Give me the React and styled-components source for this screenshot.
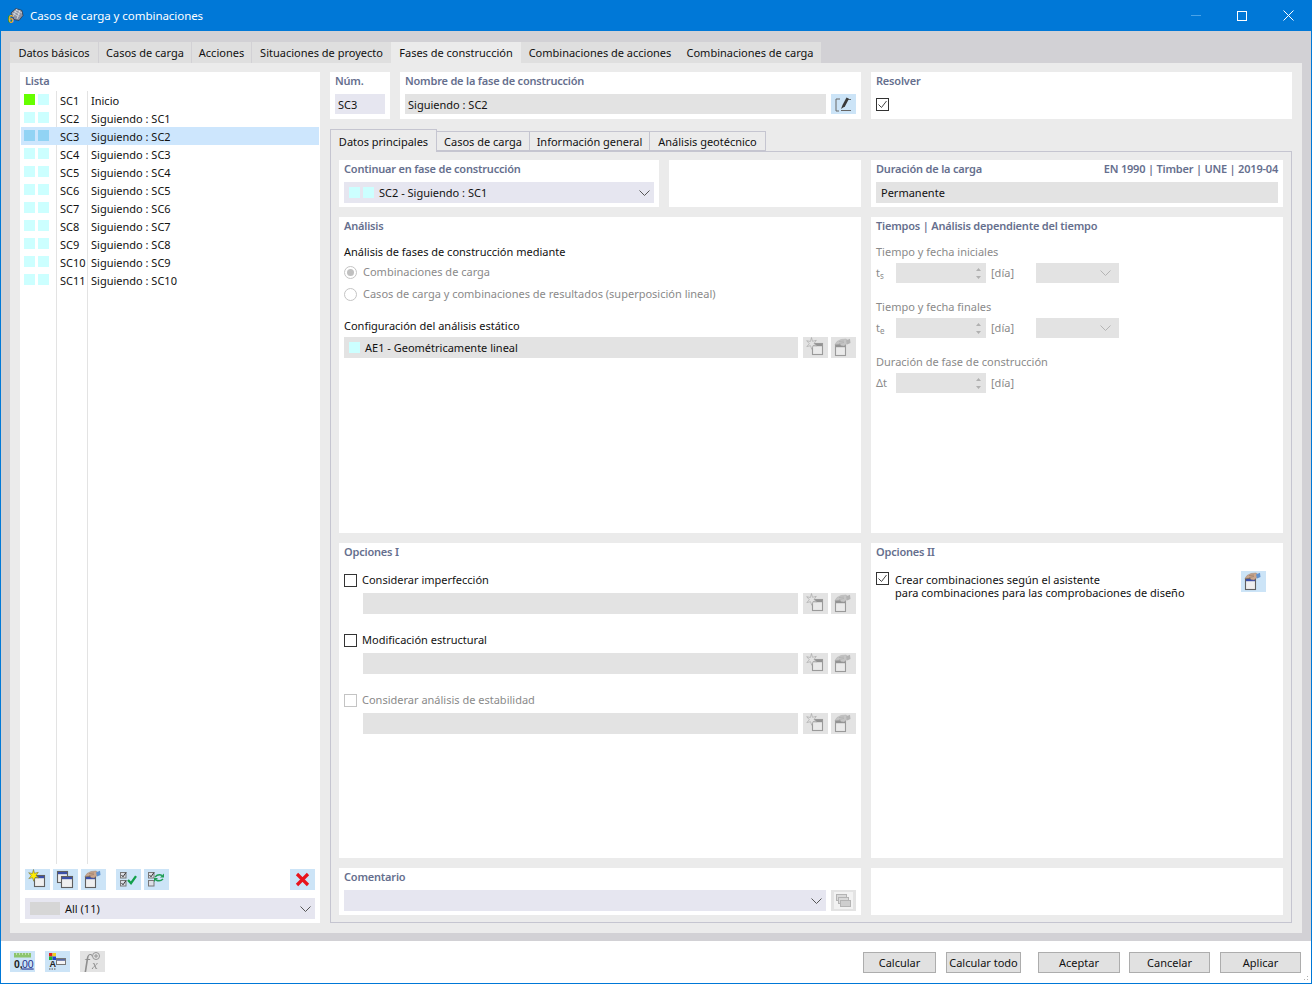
import React from 'react';
import styled, { createGlobalStyle } from 'styled-components';

const Global = createGlobalStyle`
  html, body { margin: 0; padding: 0; background: #fff; }
  body { font-family: 'Noto Sans', 'Open Sans', sans-serif; font-size: 11px; color: #111; }
  * { box-sizing: border-box; }
`;

const STAGES = [
  ['SC1', 'Inicio'], ['SC2', 'Siguiendo : SC1'], ['SC3', 'Siguiendo : SC2'], ['SC4', 'Siguiendo : SC3'],
  ['SC5', 'Siguiendo : SC4'], ['SC6', 'Siguiendo : SC5'], ['SC7', 'Siguiendo : SC6'], ['SC8', 'Siguiendo : SC7'],
  ['SC9', 'Siguiendo : SC8'], ['SC10', 'Siguiendo : SC9'], ['SC11', 'Siguiendo : SC10'],
];

// all toolbar icons share the 25x21 box of the button
const Ico = ({ children }) => <svg width="25" height="21" viewBox="0 0 25 21">{children}</svg>;

const Frame = ({ x, y, w = 10, h = 11 }) => (
  <>
    <rect x={x + 0.5} y={y + 0.5} width={w} height={h} fill="#efefef" stroke="#5f5f5f" strokeWidth="1.100" />
    <rect x={x + 1} y={y + 1} width={w - 1} height={2.200} fill="#3b4fa8" />
  </>
);

const NewIcon = () => (
  <Ico>
    <Frame x={9} y={6} />
    <path d="M8.500 0.500l1 3.800 3.800-1-2.300 3.200 2.800 2.300-3.700-.3-1.300 3.800-1.300-3.600-3.700.9 2.500-2.900-2.600-3 3.700.8z" fill="#ffee00" stroke="#77703a" strokeWidth=".6" />
  </Ico>
);
const CopyIcon = () => <Ico><Frame x={4} y={2} /><Frame x={8} y={7} w={11} /></Ico>;
const HandIcon = () => (
  <Ico>
    <Frame x={4} y={7} />
    <path d="M4 7.500l2-3 4-2 5-.5 2 1.500-1 3-3 2.500-3-.5-1-1.500z" fill="#c9a68e" stroke="#9a806e" strokeWidth=".5" />
    <path d="M8 4.500l5-.5M8 6.500l5-1" stroke="#8f7361" strokeWidth=".6" />
    <path d="M15 3.500l4-1.800.5 4.300-3.500 1.500z" fill="#5f92d0" />
  </Ico>
);
const Box = ({ y, on }) => (
  <>
    <rect x="4.500" y={y + 0.5} width="5.500" height="5.500" fill="#dcdfe6" stroke="#777" />
    {on && <path d={`M5.500 ${y + 3}l1.500 1.800 3-4.300`} fill="none" stroke="#333" />}
  </>
);
const ChecksIcon = () => (
  <Ico>
    <Box y={3} on /><Box y={11} on />
    <path d="M12 11l3 3.200 5-7" fill="none" stroke="#12a04a" strokeWidth="2.300" />
  </Ico>
);
const SwapIcon = () => (
  <Ico>
    <Box y={3} on /><Box y={11} />
    <path d="M11 8c2-2 5-2.500 7-1.500M19 10c-2 2-5 2-7 1" fill="none" stroke="#1f9e55" strokeWidth="1.500" />
    <path d="M20 4.500v4h-4zM10 13v-4h4z" fill="#1f9e55" />
  </Ico>
);
const RedX = () => (
  <Ico><path d="M7 5l11 11M18 5L7 16" stroke="#e8141c" strokeWidth="3.200" /></Ico>
);
const EditIcon = () => (
  <Ico>
    <path d="M9 5H5v12h3M10 16.500h10M17 5.500h3" fill="none" stroke="#666" />
    <path d="M10 15l1.500-4 4-7.500 2.500 1.200-4 7.500z" fill="#3a3a3a" />
  </Ico>
);
const StackIcon = () => (
  <Ico>
    <rect x="3" y="2" width="19" height="17" fill="#fff" />
    <rect x="5.500" y="4.500" width="10" height="6" fill="#d0d0d0" stroke="#8e8e8e" />
    <rect x="7.500" y="7.500" width="10" height="6" fill="#d0d0d0" stroke="#8e8e8e" />
    <rect x="9.500" y="10.500" width="10" height="6" fill="#bcbcbc" stroke="#8e8e8e" />
  </Ico>
);
const UnitsIcon = () => (
  <Ico>
    <rect x="4" y="2" width="17" height="4.500" fill="#8cc56e" />
    <path d="M6.500 2v2M9.500 2v2M12.500 2v2M15.500 2v2M18.500 2v2" stroke="#bfe0ac" />
    <text x="4" y="16.500" fontFamily="Liberation Sans" fontSize="10.500" fontWeight="700" fill="#222">0,</text>
    <text x="12" y="16.500" fontFamily="Liberation Sans" fontSize="10.500" fill="#1c2c8c" textDecoration="underline">00</text>
  </Ico>
);
const ColorIcon = () => (
  <Ico>
    <rect x="4" y="2" width="3.500" height="3.500" fill="#e02020" />
    <rect x="7.500" y="2" width="3.500" height="3.500" fill="#f0d020" />
    <rect x="4" y="5.500" width="3.500" height="3.500" fill="#20b030" />
    <rect x="7.500" y="5.500" width="3.500" height="3.500" fill="#2040d0" />
    <text x="4.500" y="16" fontFamily="Liberation Sans" fontSize="9" fontWeight="700" fill="#222">A</text>
    <path d="M4 18h1.500M6.500 18H8M9 18h1.500" stroke="#555" />
    <rect x="11.500" y="7.500" width="9" height="6" fill="#f4f4f4" stroke="#777" />
    <rect x="12" y="8" width="8" height="1.800" fill="#5a6aa0" />
  </Ico>
);
const FxIcon = () => (
  <Ico>
    <text x="4" y="18" fontFamily="Liberation Serif" fontStyle="italic" fontSize="20" fill="#4a4a4a">f</text>
    <text x="12" y="18" fontFamily="Liberation Serif" fontStyle="italic" fontSize="13" fill="#4a4a4a">x</text>
    <circle cx="16" cy="5" r="3.500" fill="none" stroke="#555" />
    <path d="M14 5h4M16 3v4" stroke="#555" />
  </Ico>
);
const AppIcon = () => (
  <svg width="16" height="16" viewBox="0 0 16 16" style={{ flexShrink: 0 }}>
    <path d="M3 5l5-4.500 6 2 1 5-4 5-5-1z" fill="#8d93a3" stroke="#2c3140" strokeWidth=".7" />
    <path d="M6 3l6 3.500M4.500 5l6 3.500M8 1.500l6 3.500M9 .8l-4 8M12 2l-3 9" stroke="#e4e6ea" strokeWidth=".7" />
    <text x="0" y="15" fontFamily="Liberation Sans" fontSize="10" fontWeight="700" fill="#f2bd1c" stroke="#6b5200" strokeWidth=".2">6</text>
  </svg>
);
const Chevron = ({ $muted }) => (
  <svg width="11" height="6" viewBox="0 0 11 6" style={{ flexShrink: 0 }}>
    <path d="M.5.5l5 5 5-5" fill="none" stroke={$muted ? '#b4b4b4' : '#555'} />
  </svg>
);

const Window = styled.div`
  width: 1312px;
  height: 984px;
  display: flex;
  flex-direction: column;
  border: 1px solid #0078d7;
  border-top: 0;
  overflow: hidden;
`;

const TitleBar = styled.header`
  height: 31px;
  flex-shrink: 0;
  background: #0078d7;
  color: #fff;
  display: flex;
  align-items: center;
  padding-left: 7px;
  font-size: 11.500px;
  letter-spacing: -0.05px;
`;

const TitleText = styled.span`
  flex: 1;
  margin-left: 6px;
`;

const WinButton = styled.div`
  width: 46px;
  height: 31px;
  display: flex;
  align-items: center;
  justify-content: center;
`;

const Body = styled.div`
  flex: 1;
  min-height: 0;
  background: #d2d1d5;
  padding: 11px 9px 8px;
  display: flex;
  flex-direction: column;
`;

const TabStrip = styled.nav`
  display: flex;
  height: 21px;
  flex-shrink: 0;
`;

const Tab = styled.div`
  width: ${({ $w }) => $w}px;
  background: ${({ $active }) => ($active ? '#ebebeb' : '#dfdfdf')};
  margin-right: ${({ $gap }) => ($gap ? 1 : 0)}px;
  display: flex;
  align-items: center;
  justify-content: center;
  white-space: nowrap;
`;

const Sheet = styled.main`
  flex: 1;
  min-height: 0;
  background: #ebebeb;
  padding: 9px 10px 10px;
  display: flex;
  gap: 10px;
`;

const ListPanel = styled.aside`
  width: 300px;
  background: #fff;
  display: flex;
  flex-direction: column;
  padding: 1px 1px 4px;
`;

const Heading = styled.div`
  height: 16px;
  line-height: 16px;
  font-weight: 600;
  letter-spacing: -0.2px;
  color: #666f8e;
  white-space: nowrap;
  display: flex;
  justify-content: space-between;
  flex-shrink: 0;
`;

const ListHeading = styled(Heading)`
  padding-left: 4px;
  margin-bottom: 2px;
`;

const List = styled.div`
  flex: 1;
  background:
    linear-gradient(#e3e3e3, #e3e3e3) 35px 0 / 1px 773px no-repeat,
    linear-gradient(#e3e3e3, #e3e3e3) 66px 0 / 1px 773px no-repeat;
`;

const Row = styled.div`
  height: 18px;
  display: flex;
  align-items: center;
  background: ${({ $selected }) => ($selected ? '#cde6fd' : 'transparent')};
`;

const Swatches = styled.div`
  width: 36px;
  display: flex;
  gap: 3px;
  padding-left: 3px;
  margin-top: -1px;
`;

const SwatchPair = styled.div`
  display: flex;
  gap: 3px;
`;

const Swatch = styled.i`
  display: block;
  width: 11px;
  height: 11px;
  flex-shrink: 0;
  background: ${({ $color }) => $color || '#ccffff'};
`;

const RowCode = styled.span`
  width: 31px;
  padding-left: 3px;
`;

const RowName = styled.span`
  padding-left: 3px;
`;

const ListTools = styled.div`
  display: flex;
  gap: 3px;
  padding: 0 4px;
  margin-bottom: 8px;
`;

const ToolGap = styled.div`
  width: ${({ $w }) => ($w ? `${$w}px` : 'auto')};
  flex: ${({ $w }) => ($w ? 'none' : 1)};
`;

const IconBtn = styled.div`
  width: 25px;
  height: ${({ $h }) => $h || 21}px;
  flex-shrink: 0;
  display: flex;
  align-items: center;
  justify-content: center;
  background: ${({ $off }) => ($off ? '#e3e3e3' : '#cce4f7')};
  svg { ${({ $off }) => ($off ? 'filter: grayscale(1) opacity(.55);' : '')} }
`;

const Select = styled.div`
  height: 21px;
  flex: 1;
  min-width: 0;
  background: #e6e6f0;
  display: flex;
  align-items: center;
  gap: 5px;
  padding: 0 4px 0 5px;
`;

const ListSelect = styled(Select)`
  flex: none;
  margin: 0 4px;
`;

const AllSwatch = styled.i`
  width: 30px;
  height: 13px;
  background: #d6d6d6;
`;

const Grow = styled.span`
  flex: 1;
`;

const Right = styled.section`
  flex: 1;
  min-width: 0;
  display: flex;
  flex-direction: column;
`;

const TopRow = styled.div`
  display: grid;
  grid-template-columns: 60px 461px 421px;
  gap: 10px;
  height: 47px;
  flex-shrink: 0;
  margin-bottom: 10px;
`;

const Card = styled.div`
  background: #fff;
  padding: 1px 5px;
  min-width: 0;
`;

const FieldRow = styled.div`
  display: flex;
  gap: 5px;
  margin-top: ${({ $top }) => $top ?? 5}px;
  padding-left: ${({ $indent }) => $indent || 0}px;
  ${IconBtn} + ${IconBtn} { margin-left: -2px; }
`;

const Field = styled.div`
  height: ${({ $h }) => $h || 21}px;
  flex: 1;
  min-width: 0;
  background: ${({ $tone }) => ($tone === 'blue' ? '#e6e6f0' : '#e3e3e3')};
  display: flex;
  align-items: center;
  gap: 5px;
  padding: 0 ${({ $pad }) => $pad ?? 5}px;
`;

const Check = styled.span`
  width: 13px;
  height: 13px;
  flex-shrink: 0;
  border: 1px solid ${({ $off }) => ($off ? '#c4c4c4' : '#333')};
  background: #fff;
  display: flex;
  align-items: center;
  justify-content: center;
`;

const Tick = () => (
  <svg width="11" height="11" viewBox="0 0 11 11"><path d="M1.500 5.500l3 3 5-6.500" fill="none" stroke="#444" /></svg>
);

const SubTabs = styled.nav`
  display: flex;
  align-items: flex-end;
  height: 22px;
  flex-shrink: 0;
  position: relative;
  z-index: 1;
`;

const SubTab = styled.div`
  width: ${({ $w }) => $w}px;
  height: ${({ $active }) => ($active ? 23 : 20)}px;
  margin-bottom: ${({ $active }) => ($active ? -1 : 0)}px;
  background: #ebebeb;
  border: 1px solid #c5c5d0;
  border-bottom: ${({ $active }) => ($active ? 0 : '1px solid #c5c5d0')};
  margin-right: -1px;
  display: flex;
  align-items: center;
  justify-content: center;
  white-space: nowrap;
`;

const TabBody = styled.div`
  flex: 1;
  min-height: 0;
  border: 1px solid #c5c5d0;
  padding: 8px 8px 7px;
  display: grid;
  grid-template-columns: 522px 412px;
  grid-template-rows: 47px 316px 315px 47px;
  gap: 10px;
`;

const Split = styled.div`
  display: grid;
  grid-template-columns: 320px 192px;
  gap: 10px;
`;

const Line = styled.div`
  height: 16px;
  line-height: 16px;
  white-space: nowrap;
  color: ${({ $off }) => ($off ? '#8a8a8a' : 'inherit')};
  margin-top: ${({ $top }) => $top || 0}px;
`;

const OptionLine = styled(Line)`
  display: flex;
  align-items: center;
  gap: ${({ $gap }) => $gap || 5}px;
`;

const Radio = styled.span`
  width: 13px;
  height: 13px;
  border-radius: 50%;
  border: 1px solid #c4c4c4;
  background: #fff;
  display: flex;
  align-items: center;
  justify-content: center;
  flex-shrink: 0;
  &::after {
    content: '';
    width: 7px;
    height: 7px;
    border-radius: 50%;
    background: ${({ $on }) => ($on ? '#c0c0c0' : 'transparent')};
  }
`;

const TimeRow = styled.div`
  display: flex;
  align-items: center;
  height: 20px;
  color: #8a8a8a;
  margin-top: 3px;
`;

const TimeSymbol = styled.span`
  width: 20px;
  margin-top: -2px;
  sub { font-size: 8px; vertical-align: -2px; line-height: 0; }
`;

const Spin = styled.div`
  width: 90px;
  height: 20px;
  background: #e3e3e3;
  display: flex;
  align-items: center;
  justify-content: flex-end;
  padding-right: 4px;
`;

const TimeUnit = styled.span`
  width: 50px;
  padding-left: 5px;
  margin-top: -2px;
`;

const TimeSelect = styled.div`
  width: 83px;
  height: 20px;
  background: #e3e3e3;
  display: flex;
  align-items: center;
  justify-content: flex-end;
  padding-right: 8px;
`;

const OptBlock = styled.div`
  margin-top: ${({ $top }) => $top}px;
`;

const WizardRow = styled.div`
  display: flex;
  align-items: flex-start;
  gap: 6px;
  margin-top: 12px;
`;

const WizardText = styled.div`
  flex: 1;
  line-height: 13px;
  padding-top: 1px;
`;

const WizardBtn = styled(IconBtn)`
  margin: -1px 12px 0 0;
`;

const Footer = styled.footer`
  height: 42px;
  flex-shrink: 0;
  background: #fff;
  display: flex;
  align-items: flex-start;
  padding: 10px 0 0 9px;
  position: relative;
`;

const FootIcons = styled.div`
  display: flex;
  gap: 10px;
  flex: 1;
`;

const FootButtons = styled.div`
  display: flex;
  gap: 10px;
  margin: 1px 10px 0 0;
`;

const Button = styled.div`
  width: ${({ $w }) => $w}px;
  margin-left: ${({ $ml }) => $ml || 0}px;
  height: 21px;
  background: #e1e1e1;
  border: 1px solid #adadad;
  display: flex;
  align-items: center;
  justify-content: center;
  white-space: nowrap;
`;

const Grip = styled.i`
  position: absolute;
  right: 1px;
  bottom: 1px;
  width: 10px;
  height: 10px;
  background:
    radial-gradient(circle, #b0b0b0 1px, transparent 1px) 0 0 / 3px 3px;
  clip-path: polygon(100% 0, 100% 100%, 0 100%);
`;

const SpinArrows = () => (
  <svg width="7" height="13" viewBox="0 0 7 13"><path d="M3.500 1L6 4H1zM3.500 12L1 9h5z" fill="#b0b0b0" /></svg>
);

const TOP_TABS = [
  ['Datos básicos', 88, 1], ['Casos de carga', 92, 1], ['Acciones', 59, 1], ['Situaciones de proyecto', 139, 0],
  ['Fases de construcción', 130, 0], ['Combinaciones de acciones', 158, 0], ['Combinaciones de carga', 142, 0],
];

const OptionBlock = ({ top, label, off }) => (
  <OptBlock $top={top}>
    <OptionLine $off={off}><Check $off={off} />{label}</OptionLine>
    <FieldRow $indent={19}>
      <Field />
      <IconBtn $off><NewIcon /></IconBtn>
      <IconBtn $off><HandIcon /></IconBtn>
    </FieldRow>
  </OptBlock>
);

export default function App() {
  return (
    <Window>
      <Global />
      <TitleBar>
        <AppIcon />
        <TitleText>Casos de carga y combinaciones</TitleText>
        <WinButton><svg width="10" height="1"><rect width="10" height="1" fill="#4aa3e8" /></svg></WinButton>
        <WinButton><svg width="10" height="10"><rect x=".5" y=".5" width="9" height="9" fill="none" stroke="#fff" /></svg></WinButton>
        <WinButton><svg width="11" height="11"><path d="M.5.5l10 10M10.500.5l-10 10" stroke="#fff" /></svg></WinButton>
      </TitleBar>
      <Body>
        <TabStrip>
          {TOP_TABS.map(([label, w, gap]) => (
            <Tab key={label} $w={w} $gap={gap} $active={label === 'Fases de construcción'}>{label}</Tab>
          ))}
        </TabStrip>
        <Sheet>
          <ListPanel>
            <ListHeading>Lista</ListHeading>
            <List>
              {STAGES.map(([code, name], i) => (
                <Row key={code} $selected={i === 2}>
                  <Swatches>
                    <Swatch $color={i === 0 ? '#66ff00' : i === 2 ? '#91d3f4' : undefined} />
                    <Swatch $color={i === 2 ? '#91d3f4' : undefined} />
                  </Swatches>
                  <RowCode>{code}</RowCode>
                  <RowName>{name}</RowName>
                </Row>
              ))}
            </List>
            <ListTools>
              <IconBtn><NewIcon /></IconBtn>
              <IconBtn><CopyIcon /></IconBtn>
              <IconBtn><HandIcon /></IconBtn>
              <ToolGap $w={4} />
              <IconBtn><ChecksIcon /></IconBtn>
              <IconBtn><SwapIcon /></IconBtn>
              <ToolGap />
              <IconBtn><RedX /></IconBtn>
            </ListTools>
            <ListSelect>
              <AllSwatch />
              All (11)
              <Grow />
              <Chevron />
            </ListSelect>
          </ListPanel>

          <Right>
            <TopRow>
              <Card>
                <Heading>Núm.</Heading>
                <FieldRow><Field $h={20} $tone="blue" $pad={3}>SC3</Field></FieldRow>
              </Card>
              <Card>
                <Heading>Nombre de la fase de construcción</Heading>
                <FieldRow>
                  <Field $h={20} $pad={3}>Siguiendo : SC2</Field>
                  <IconBtn $h={20}><EditIcon /></IconBtn>
                </FieldRow>
              </Card>
              <Card>
                <Heading>Resolver</Heading>
                <FieldRow $top={9}><Check><Tick /></Check></FieldRow>
              </Card>
            </TopRow>

            <SubTabs>
              <SubTab $w={107} $active>Datos principales</SubTab>
              <SubTab $w={94}>Casos de carga</SubTab>
              <SubTab $w={121}>Información general</SubTab>
              <SubTab $w={117}>Análisis geotécnico</SubTab>
            </SubTabs>

            <TabBody>
              <Split>
                <Card>
                  <Heading>Continuar en fase de construcción</Heading>
                  <FieldRow>
                    <Select>
                      <SwatchPair><Swatch /><Swatch /></SwatchPair>
                      SC2 - Siguiendo : SC1
                      <Grow />
                      <Chevron />
                    </Select>
                  </FieldRow>
                </Card>
                <Card />
              </Split>
              <Card>
                <Heading><span>Duración de la carga</span><span>EN 1990 | Timber | UNE | 2019-04</span></Heading>
                <FieldRow><Field>Permanente</Field></FieldRow>
              </Card>

              <Card>
                <Heading>Análisis</Heading>
                <Line $top={10}>Análisis de fases de construcción mediante</Line>
                <OptionLine $off $top={4} $gap={6}><Radio $on />Combinaciones de carga</OptionLine>
                <OptionLine $off $top={6} $gap={6}><Radio />Casos de carga y combinaciones de resultados (superposición lineal)</OptionLine>
                <Line $top={16}>Configuración del análisis estático</Line>
                <FieldRow $top={3}>
                  <Field><Swatch />AE1 - Geométricamente lineal</Field>
                  <IconBtn $off><NewIcon /></IconBtn>
                  <IconBtn $off><HandIcon /></IconBtn>
                </FieldRow>
              </Card>
              <Card>
                <Heading>Tiempos | Análisis dependiente del tiempo</Heading>
                <Line $off $top={10}>Tiempo y fecha iniciales</Line>
                <TimeRow>
                  <TimeSymbol>t<sub>s</sub></TimeSymbol>
                  <Spin><SpinArrows /></Spin>
                  <TimeUnit>[día]</TimeUnit>
                  <TimeSelect><Chevron $muted /></TimeSelect>
                </TimeRow>
                <Line $off $top={16}>Tiempo y fecha finales</Line>
                <TimeRow>
                  <TimeSymbol>t<sub>e</sub></TimeSymbol>
                  <Spin><SpinArrows /></Spin>
                  <TimeUnit>[día]</TimeUnit>
                  <TimeSelect><Chevron $muted /></TimeSelect>
                </TimeRow>
                <Line $off $top={16}>Duración de fase de construcción</Line>
                <TimeRow>
                  <TimeSymbol>Δt</TimeSymbol>
                  <Spin><SpinArrows /></Spin>
                  <TimeUnit>[día]</TimeUnit>
                </TimeRow>
              </Card>

              <Card>
                <Heading>Opciones I</Heading>
                <OptionBlock top={12} label="Considerar imperfección" />
                <OptionBlock top={18} label="Modificación estructural" />
                <OptionBlock top={18} label="Considerar análisis de estabilidad" off />
              </Card>
              <Card>
                <Heading>Opciones II</Heading>
                <WizardRow>
                  <Check><Tick /></Check>
                  <WizardText>Crear combinaciones según el asistente<br />para combinaciones para las comprobaciones de diseño</WizardText>
                  <WizardBtn><HandIcon /></WizardBtn>
                </WizardRow>
              </Card>

              <Card>
                <Heading>Comentario</Heading>
                <FieldRow>
                  <Select><Grow /><Chevron /></Select>
                  <IconBtn $off><StackIcon /></IconBtn>
                </FieldRow>
              </Card>
              <Card />
            </TabBody>
          </Right>
        </Sheet>
      </Body>
      <Footer>
        <FootIcons>
          <IconBtn><UnitsIcon /></IconBtn>
          <IconBtn><ColorIcon /></IconBtn>
          <IconBtn $off><FxIcon /></IconBtn>
        </FootIcons>
        <FootButtons>
          <Button $w={73}>Calcular</Button>
          <Button $w={75}>Calcular todo</Button>
          <Button $w={82} $ml={7}>Aceptar</Button>
          <Button $w={81} $ml={-1}>Cancelar</Button>
          <Button $w={81}>Aplicar</Button>
        </FootButtons>
        <Grip />
      </Footer>
    </Window>
  );
}
